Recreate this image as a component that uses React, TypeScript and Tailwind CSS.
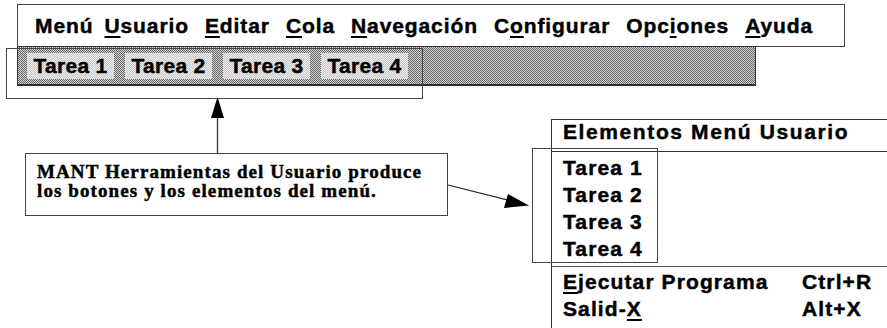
import React from "react";

const sans = "font-['Liberation_Sans',Arial,sans-serif]";
const serif = "font-['Liberation_Serif','Times_New_Roman',serif]";
const heavy = "[-webkit-text-stroke:0.45px_#000]";

// letter with mnemonic underline
function Mn({ c }: { c: string }) {
  return <span className="underline decoration-2 underline-offset-[3px]">{c}</span>;
}

function MenuWord({ word, idx }: { word: string; idx: number }) {
  return (
    <span>
      {word.slice(0, idx)}
      <Mn c={word[idx]} />
      {word.slice(idx + 1)}
    </span>
  );
}

function ToolButton({ label }: { label: string }) {
  return (
    <div className="h-[26px] w-[87px] flex items-center justify-center bg-[image:repeating-conic-gradient(#c4c4c4_0_25%,#f2f2f2_0_50%)] bg-[length:2px_2px]">
      <span className="text-[21px] font-bold leading-none tracking-[0.3px]">{label}</span>
    </div>
  );
}

export default function App() {
  return (
    <div className={`relative w-[887px] h-[328px] bg-white overflow-hidden text-black ${sans} ${heavy}`}>
      {/* menu bar */}
      <div className="absolute left-[17px] top-[4px] w-[828px] h-[43px] border border-[#444] flex items-center pl-[17px] gap-[16px] text-[21px] font-bold tracking-[0.9px]">
        <span className="-mr-[5px]">Menú</span>
        <MenuWord word="Usuario" idx={0} />
        <MenuWord word="Editar" idx={0} />
        <MenuWord word="Cola" idx={0} />
        <MenuWord word="Navegación" idx={0} />
        <MenuWord word="Configurar" idx={1} />
        <MenuWord word="Opciones" idx={3} />
        <MenuWord word="Ayuda" idx={0} />
      </div>

      {/* toolbar */}
      <div className="absolute left-[17px] top-[46px] w-[739px] h-[40px] border border-[#333] border-b-2 bg-[image:repeating-conic-gradient(#6a6a6a_0_25%,#cfcfcf_0_50%)] bg-[length:2px_2px] flex items-center pl-[9px] gap-[11px]">
        <ToolButton label="Tarea 1" />
        <ToolButton label="Tarea 2" />
        <ToolButton label="Tarea 3" />
        <ToolButton label="Tarea 4" />
      </div>

      {/* outline around buttons */}
      <div className="absolute left-[6px] top-[48px] w-[417px] h-[51px] border border-[#444]" />

      {/* arrows */}
      <svg className="absolute left-0 top-0" width="887" height="328" viewBox="0 0 887 328">
        <line x1="217.5" y1="112" x2="217.5" y2="153" stroke="#333" strokeWidth="1.3" />
        <polygon points="217.5,97 211,118 224,118" fill="#000" />
        <line x1="448" y1="185" x2="515" y2="202" stroke="#222" strokeWidth="1.2" />
        <polygon points="529,205.5 508,194 504,208" fill="#000" />
      </svg>

      {/* annotation */}
      <div className={`absolute left-[25px] top-[153px] w-[423px] h-[63px] border border-[#444] pl-[11px] pt-[8px] ${serif} font-bold text-[19px] leading-[19px] tracking-[1.1px]`}>
        <div>MANT Herramientas del Usuario produce</div>
        <div>los botones y los elementos del menú.</div>
      </div>

      {/* user menu panel */}
      <div className="absolute left-[551px] top-[119px] w-[340px] h-[215px] border-l border-t border-[#333] flex flex-col text-[21px] font-bold tracking-[1.1px]">
        <div className="h-[32px] border-b border-[#333] pl-[11px] pb-[7px] flex items-center tracking-[1.6px]">Elementos Menú Usuario</div>
        <div className="h-[114px] pl-[11px] pt-[2px] flex flex-col">
          {["Tarea 1", "Tarea 2", "Tarea 3", "Tarea 4"].map((t) => (
            <div key={t} className="h-[27px] leading-[27px]">{t}</div>
          ))}
        </div>
        <div className="border-t border-[#555] pl-[11px] pt-[1px]">
          <div className="h-[27px] flex items-center">
            <span className="w-[239px]"><Mn c="E" />jecutar Programa</span>
            <span>Ctrl+R</span>
          </div>
          <div className="h-[27px] flex items-center">
            <span className="w-[239px]">Salid-<Mn c="X" /></span>
            <span>Alt+X</span>
          </div>
        </div>
      </div>

      {/* outline around menu tasks */}
      <div className="absolute left-[532px] top-[148px] w-[126px] h-[115px] border border-[#444]" />
    </div>
  );
}
